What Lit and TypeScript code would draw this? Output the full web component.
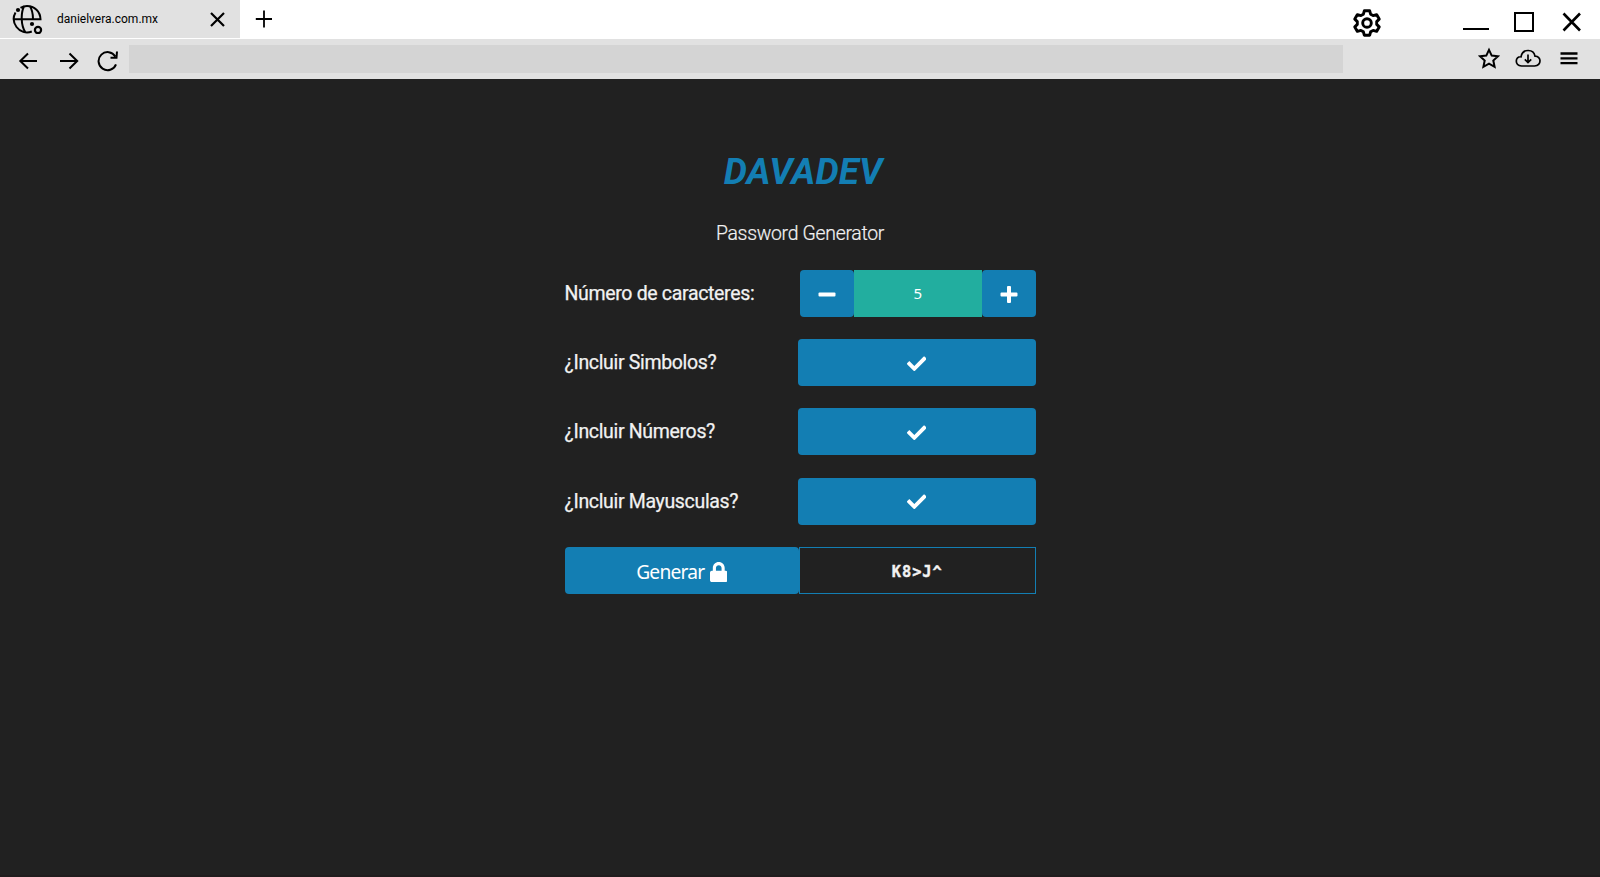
import { LitElement, html, css } from "lit";
import { customElement, state } from "lit/decorators.js";

const checkIcon = html`<svg class="check" viewBox="0 0 512 512" fill="#fff">
  <path d="M173.898 439.404l-166.4-166.4c-9.997-9.997-9.997-26.206 0-36.204l36.203-36.204c9.997-9.998 26.207-9.998 36.204 0L192 312.69 432.095 72.596c9.997-9.997 26.207-9.997 36.204 0l36.203 36.204c9.997 9.997 9.997 26.206 0 36.204l-294.4 294.401c-9.998 9.997-26.207 9.997-36.204-.001z"/>
</svg>`;

@customElement("browser-chrome")
class BrowserChrome extends LitElement {
  static styles = css`
    :host { display: block; height: 79px; background: #e1e1e1; color: #000; stroke-width: 2; }
    svg { display: block; flex: none; fill: none; stroke: #000; }
    .top { display: flex; height: 38px; background: #fff; border-bottom: 1px solid #fff; }
    .tab { display: flex; align-items: center; box-sizing: border-box; width: 240px; padding: 0 15.500px 0 12px; background: #e1e1e1; }
    .name { flex: 1; padding-left: 13px; font: 12px/14px Roboto, sans-serif; letter-spacing: 0; }
    .add { margin: 10px 0 0 15px; }
    .window { display: flex; align-items: flex-start; margin-left: auto; padding-right: 18px; }
    .gear { margin: 8px 82px 0 0; }
    .min { margin: 27px 25px 0 0; }
    .max { margin: 12px 28px 0 0; }
    .close { margin-top: 12px; }
    .bar { display: flex; align-items: center; height: 40px; }
    .nav { display: flex; align-items: center; box-sizing: border-box; width: 129px; padding: 3px 0 0 18px; gap: 20px; }
    .reload { margin-left: -3px; }
    .address { width: 1214px; height: 28px; background: #d4d4d4; }
    .tools { display: flex; align-items: center; margin-left: auto; padding: 0 22px 3px 0; }
    .star { margin-right: 15px; }
    .cloud { margin: 0 19px 0 0; }
    .menu { margin-top: 1px; }
  `;
  render() {
    return html`
      <div class="top">
        <div class="tab">
          <svg width="32" height="30" viewBox="12 4 32 30" stroke-width="2">
            <path d="M20.5 7.8C22.600 6.600 24.800 6 27 6C34.500 6 40.300 11.600 40.500 19.200H14M15.500 12.500C13 17 13.400 22.800 16.500 27C20 31.700 26 33.700 31.800 31.500M24.300 6C20.800 12 20.500 25 25.500 32.500M29.700 5.800C32 9.500 33 14.500 33 19"/>
            <circle cx="18" cy="10" r="2.100" fill="#000" stroke="none"/>
            <circle cx="32" cy="24" r="2.100" fill="#000" stroke="none"/>
            <circle cx="38" cy="30" r="3.100" stroke-width="2.200"/>
          </svg>
          <span class="name">danielvera.com.mx</span>
          <svg width="15" height="15" viewBox="0 0 15 15" stroke-width="2.200"><path d="M1 1L14 14M14 1L1 14"/></svg>
        </div>
        <svg class="add" width="18" height="18" viewBox="0 0 18 18" stroke-width="1.8"><path d="M9 .5V17.500M.8 9H17"/></svg>
        <div class="window">
          <svg class="gear" width="28" height="29" viewBox="1353 8 28 29" stroke-width="2.900" stroke-linejoin="round">
            <path d="M1364.300 10.800h5.400l.9 3.400 2.500 1.400 3.500-1 2.600 4.500-2.500 2.500v2.800l2.500 2.500-2.600 4.500-3.500-1-2.500 1.400-.9 3.400h-5.400l-.9-3.400-2.500-1.400-3.500 1-2.600-4.500 2.500-2.500v-2.800l-2.500-2.500 2.600-4.500 3.500 1 2.500-1.400z"/>
            <circle cx="1367" cy="23" r="4.300"/>
          </svg>
          <svg class="min" width="26" height="3" viewBox="0 0 26 3"><path d="M0 2H26"/></svg>
          <svg class="max" width="20" height="20" viewBox="0 0 20 20"><path d="M1 1H19V19H1z"/></svg>
          <svg class="close" width="20" height="20" viewBox="0 0 20 20" stroke-width="2.600"><path d="M1.500 1.500L18 18.500M18 1.500L1.500 18.500"/></svg>
        </div>
      </div>
      <div class="bar">
        <div class="nav">
          <svg width="21" height="20" viewBox="18 51 21 20"><path d="M37 61H20.500M28 53.500L20.300 61L28 68.500"/></svg>
          <svg width="21" height="20" viewBox="59 51 21 20"><path d="M60 61H76.500M69.500 53.500L77.200 61L69.500 68.500"/></svg>
          <svg class="reload" width="22" height="22" viewBox="97 50 22 22"><path d="M116 64.300A9 9 0 1 1 115.300 56.500M110.500 57.800H116.500L117 51.500"/></svg>
        </div>
        <div class="address"></div>
        <div class="tools">
          <svg class="star" width="22" height="22" viewBox="1478 47 22 22"><path d="M1489 49.800L1491.700 55.600L1498 56.200L1493.300 60.500L1494.600 66.800L1489 63.600L1483.400 66.800L1484.700 60.500L1480 56.200L1486.300 55.600z"/></svg>
          <svg class="cloud" width="26" height="18" viewBox="1515 48 26 18" stroke-width="1.700">
            <path d="M1521.500 65H1534.500C1542 64.500 1541.500 55 1535 55.200C1533.500 47.500 1522.500 47.500 1521 55.800C1515 55.200 1514.300 64.500 1521.500 65zM1528 53.500V61.500M1524.800 58.300L1528 61.500L1531.200 58.300"/>
          </svg>
          <svg class="menu" width="18" height="13" viewBox="0 0 18 13" stroke-width="2.300"><path d="M.5 1.500H17.500M.5 6.300H17.500M.5 11.200H17.500"/></svg>
        </div>
      </div>`;
  }
}

@customElement("app-root")
class AppRoot extends LitElement {
  @state() private length = 5;
  @state() private password = "K8>J^";
  private options = ["¿Incluir Simbolos?", "¿Incluir Números?", "¿Incluir Mayusculas?"];

  static styles = css`
    :host { display: flex; flex-direction: column; height: 877px; background: #212121; color: #f2f2f2; font-family: Roboto, sans-serif; overflow: hidden; }
    main { box-sizing: border-box; width: 471px; margin-left: 564.500px; padding-top: 71px; }
    h1 { margin: 0; padding-left: 6px; text-align: center; font: italic 700 36.800px/44px Roboto, sans-serif; color: #137eb3; letter-spacing: 0.1px; }
    .sub { margin: 28px 0 0; text-align: center; font-weight: 300; font-size: 19.400px; line-height: 24px; letter-spacing: -0.280px; -webkit-text-stroke: 0.200px; }
    .rows { display: grid; row-gap: 22.400px; margin-top: 23.500px; }
    .row { display: flex; justify-content: space-between; align-items: center; height: 47px; }
    .label { padding-top: 1.400px; font-size: 19.500px; line-height: 24px; letter-spacing: -0.330px; -webkit-text-stroke: 0.250px; }
    button { display: flex; align-items: center; justify-content: center; box-sizing: border-box; height: 47px; border: 0; border-radius: 4px; padding: 0; background: #137eb3; color: #fff; }
    .toggle { width: 238px; }
    .stepper { display: flex; width: 235.500px; height: 47px; }
    .stepper button { width: 54px; }
    .stepper svg { margin-top: 1px; }
    .count { flex: 1; display: flex; align-items: center; justify-content: center; background: #22ae9f; color: #fff; font: 15px/20px "Noto Sans", sans-serif; }
    .check { width: 19.500px; height: 19.500px; margin-top: 2px; }
    .generate { width: 234.500px; gap: 5.500px; padding-top: 2px; font: 19.200px/26px "Noto Sans", sans-serif; letter-spacing: -0.800px; }
    .result { box-sizing: border-box; display: flex; align-items: center; justify-content: center; width: 236.500px; height: 47px; border: 1px solid #137eb3; padding-top: 2px; font: 700 15.300px/20px "DejaVu Sans Mono", monospace; letter-spacing: 1px; -webkit-text-stroke: 0.400px; }
    .edge { height: 2px; margin-top: auto; background: #201c1d; }
  `;
  render() {
    return html`
      <browser-chrome></browser-chrome>
      <main>
        <h1>DAVADEV</h1>
        <p class="sub">Password Generator</p>
        <div class="rows">
          <div class="row">
            <span class="label">Número de caracteres:</span>
            <div class="stepper">
              <button><svg width="18" height="18" viewBox="0 0 18 18"><rect x=".5" y="7.500" width="17" height="4" rx="1" fill="#fff"/></svg></button>
              <div class="count">${this.length}</div>
              <button><svg width="18" height="18" viewBox="0 0 18 18"><path fill="#fff" d="M8 1h2q1 0 1 1v5.500h5.500q1 0 1 1v2q0 1-1 1H11V17q0 1-1 1H8q-1 0-1-1v-5.500H1.500q-1 0-1-1v-2q0-1 1-1H7V2q0-1 1-1z"/></svg></button>
            </div>
          </div>
          ${this.options.map((o) => html`<div class="row"><span class="label">${o}</span><button class="toggle">${checkIcon}</button></div>`)}
          <div class="row">
            <button class="generate"><span>Generar</span>
              <svg width="17.500" height="20" viewBox="0 0 448 512"><path fill="#fff" d="M400 224h-24v-72C376 68.200 307.800 0 224 0S72 68.200 72 152v72H48c-26.500 0-48 21.500-48 48v192c0 26.500 21.500 48 48 48h352c26.500 0 48-21.500 48-48V272c0-26.500-21.500-48-48-48zm-104 0H152v-72c0-39.700 32.300-72 72-72s72 32.300 72 72v72z"/></svg>
            </button>
            <div class="result">${this.password}</div>
          </div>
        </div>
      </main>
      <div class="edge"></div>`;
  }
}
